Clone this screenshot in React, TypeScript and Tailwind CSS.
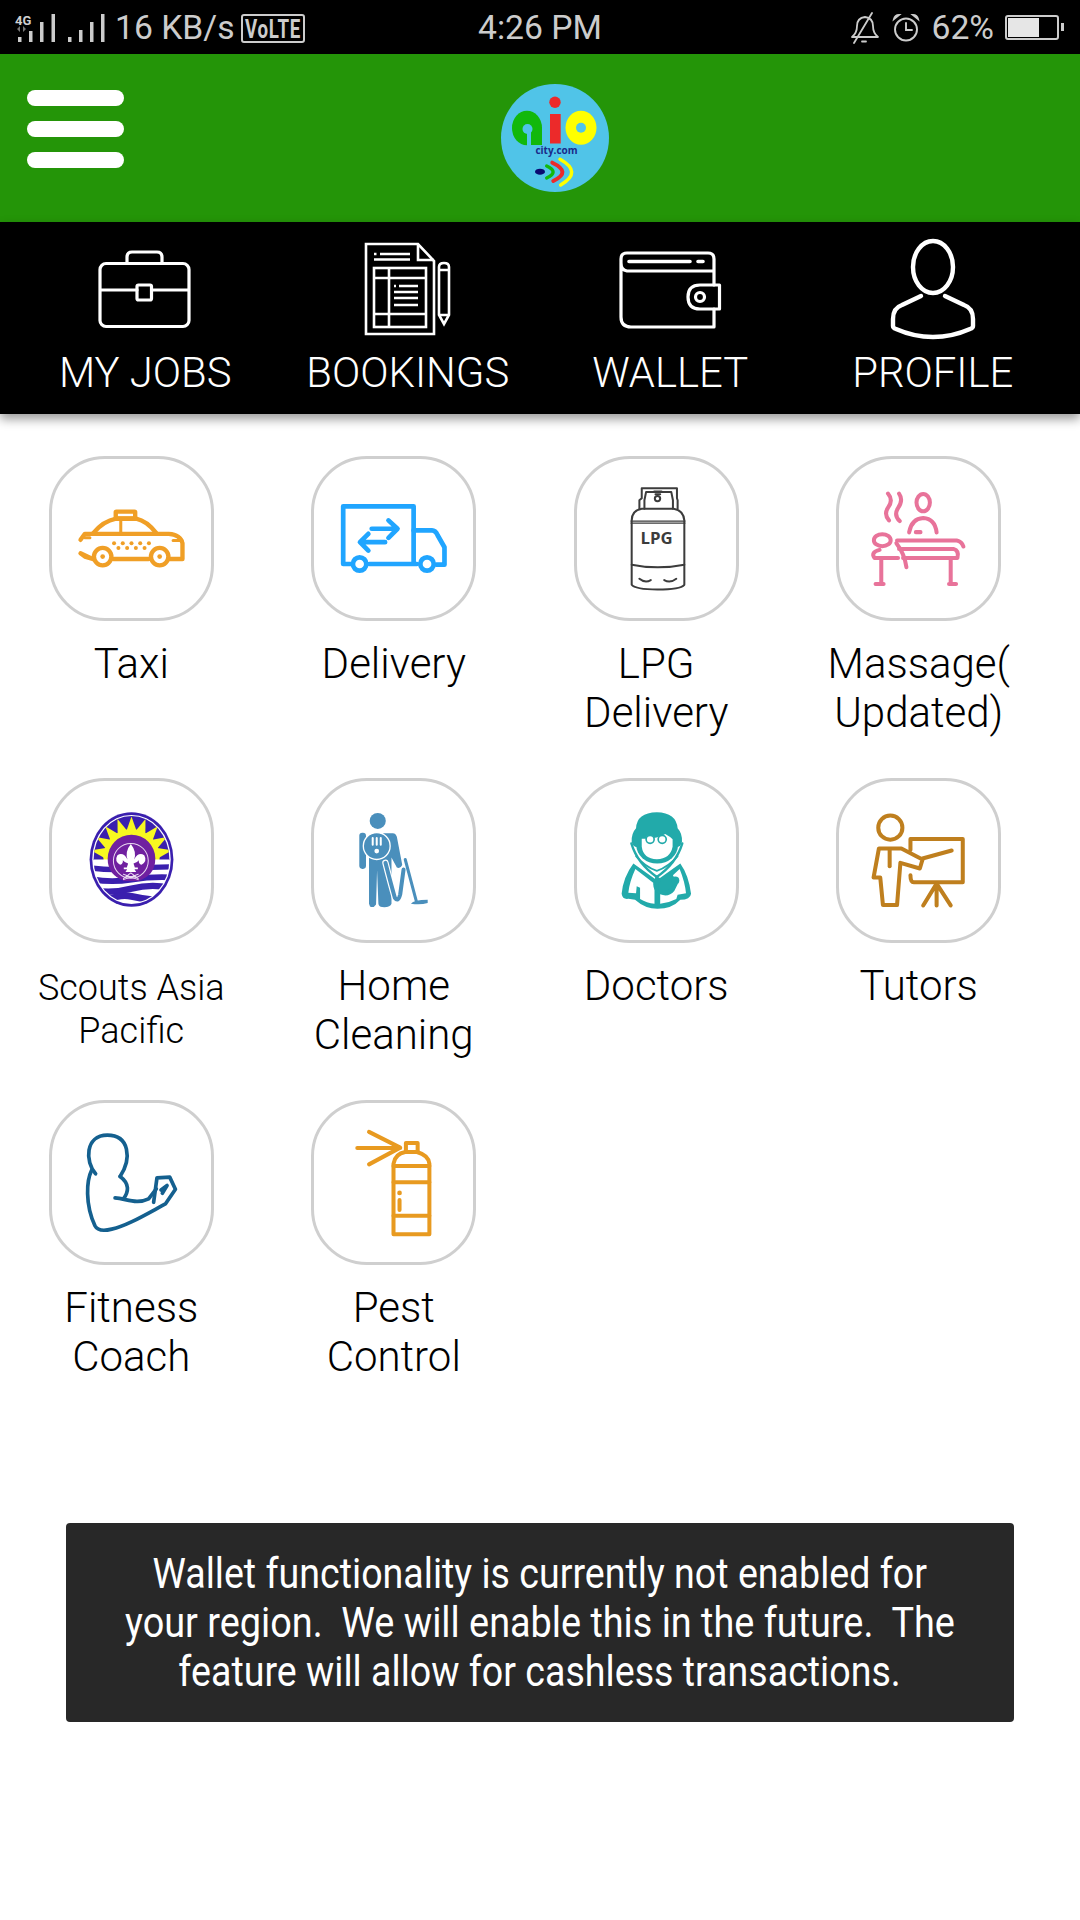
import React from "react";

const S = ({ vb, children }: { vb: string; children: React.ReactNode }) => (
  <svg viewBox={vb} className="w-[165px] h-[165px] shrink-0" fill="none" strokeLinecap="round" strokeLinejoin="round">
    {children}
  </svg>
);

const Taxi = () => (
  <S vb="58 18 492 492">
    <g stroke="#f09f26" strokeWidth="13">
      <path d="M152 268 L165 250 H415 Q450 252 456 278 V325 H418 M355 325 H250 M188 325 L165 318 L152 308 Z" />
      <path d="M190 248 Q220 212 258 205 H318 Q350 212 378 248" />
      <rect x="257" y="184" width="58" height="20" rx="2" />
      <path d="M272 205 V248 M165 262 H180 M428 270 H455" strokeWidth="9" />
      <circle cx="218" cy="318" r="26" fill="#fff" />
      <circle cx="388" cy="318" r="26" fill="#fff" />
    </g>
    <g fill="#f09f26">
      <circle cx="218" cy="318" r="7" />
      <circle cx="388" cy="318" r="7" />
      {[252, 278, 304, 330, 356].map((x) => <circle key={x} cx={x} cy="278" r="6" />)}
      {[265, 291, 317, 343].map((x) => <circle key={x} cx={x} cy="292" r="6" />)}
    </g>
  </S>
);

const Truck = () => (
  <S vb="844 18 492 492">
    <g stroke="#20a5ff" strokeWidth="14">
      <path d="M964 340 H940 V168 H1150 V340 M1018 340 H1160" />
      <path d="M1150 240 H1205 Q1215 240 1222 255 L1242 290 V342 H1218" />
      <circle cx="989" cy="340" r="20" fill="#fff" />
      <circle cx="1190" cy="340" r="20" fill="#fff" />
      <path d="M1025 235 H1100 M1075 210 L1102 235 L1075 262" />
      <path d="M1065 275 H992 M1015 250 L990 275 L1015 300" />
    </g>
  </S>
);

const Lpg = () => (
  <S vb="43 18 492 492">
    <g stroke="#3c3c3c" strokeWidth="6">
      <path d="M215 210 Q215 180 245 175 H340 Q370 180 372 210 V402 Q360 416 292 416 Q225 416 215 402 Z" />
      <path d="M213 212 H374 M213 218 H374" strokeWidth="3.5" />
      <path d="M215 342 Q292 358 372 342" />
      <path d="M238 175 V150 L245 144 V114 H350 V144 L352 150 V175" />
      <path d="M253 175 V150 L258 125 H333 L338 150 V175" />
      <path d="M238 384 Q255 398 272 388 M312 388 Q330 398 348 384" />
      <circle cx="292" cy="145" r="8" />
      <path d="M282 124 H304 M286 132 H300" strokeWidth="6" />
    </g>
    <text x="289" y="281" textAnchor="middle" fontFamily="'Open Sans', sans-serif" fontWeight="700" fontSize="50" fill="#3c3c3c">LPG</text>
  </S>
);

const Massage = () => (
  <S vb="830 18 492 492">
    <g stroke="#e8739a" strokeWidth="12">
      <path d="M985 130 Q1002 150 985 172 Q972 192 988 210" />
      <path d="M1018 130 Q1032 150 1014 175 Q1002 195 1020 212" />
      <ellipse cx="1090" cy="157" rx="20" ry="26" />
      <path d="M1048 246 Q1055 205 1090 203 Q1125 205 1130 246 M1068 245 H1082" />
      <ellipse cx="968" cy="269" rx="25" ry="18" />
      <path d="M1012 270 H1190 Q1205 273 1210 288" />
      <path d="M1018 295 H1180 Q1198 300 1192 322 H1030" />
      <path d="M1010 278 Q1035 310 1040 350" />
      <path d="M960 298 Q932 305 945 322 H1015" />
      <path d="M965 325 V400 M948 400 H972 M1172 325 V400 M1167 400 H1188" />
    </g>
  </S>
);

const rays = Array.from({ length: 9 }, (_, i) => {
  const c = (Math.PI * (i + 0.5)) / 9 + Math.PI;
  const w = Math.PI / 15;
  const p = (a: number, r: number) => `${304 + Math.cos(a) * r},${262 + Math.sin(a) * r}`;
  return `${p(c - w, 78)} ${p(c, 122)} ${p(c + w, 78)}`;
});

const Scouts = () => (
  <S vb="58 25 492 492">
    <defs>
      <clipPath id="sc">
        <ellipse cx="304" cy="268" rx="113" ry="130" />
      </clipPath>
    </defs>
    <ellipse cx="304" cy="268" rx="125" ry="141" fill="#3a1fae" />
    <ellipse cx="304" cy="268" rx="117" ry="133" fill="#fff" />
    <g clipPath="url(#sc)">
      <rect x="180" y="130" width="250" height="140" fill="#3a1fae" />
      <circle cx="304" cy="262" r="84" fill="#f8f820" />
      {rays.map((p) => <polygon key={p} points={p} fill="#f8f820" />)}
      <rect x="180" y="268" width="250" height="150" fill="#fff" />
      <path d="M180 293 Q240 302 304 296 T430 290" stroke="#3a1fae" strokeWidth="16" />
      <path d="M180 326 Q240 338 304 328 T430 322" stroke="#3a1fae" strokeWidth="17" />
      <path d="M180 358 Q240 372 304 355 T430 355" stroke="#3a1fae" strokeWidth="19" />
      <path d="M230 390 Q270 370 304 378 T380 390" stroke="#3a1fae" strokeWidth="20" />
    </g>
    <path d="M233 265 A71 71 0 0 1 375 265 Q375 315 325 332 H283 Q233 315 233 265 Z" fill="#7020a0" />
    <circle cx="302" cy="272" r="52" stroke="#e8d8f0" strokeWidth="3" />
    <path d="M302 222 Q284 245 292 268 Q280 245 262 255 Q252 272 270 284 Q280 280 278 270 Q285 278 294 280 L290 292 H281 V297 H291 L286 305 H318 L313 297 H323 V292 H314 L310 280 Q320 278 326 270 Q324 280 334 284 Q352 272 342 255 Q324 245 312 268 Q320 245 302 222 Z" fill="#fff" />
    <path d="M280 325 L302 308 L324 325 M280 312 L324 328 M324 312 L280 328" stroke="#eadcf2" strokeWidth="3" />
  </S>
);

const Cleaner = () => (
  <S vb="844 25 492 492">
    <g fill="#4a8fbc">
      <circle cx="1043" cy="153" r="24" />
      <rect x="988" y="188" width="20" height="108" rx="9" />
      <path d="M1060 190 H1088 Q1096 190 1100 200 L1116 284 Q1112 296 1100 292 L1084 262 V400 Q1080 412 1056 410 Q1046 408 1045 400 L1041 300 L1038 402 Q1030 414 1020 408 L1017 400 V260 Z" />
      <circle cx="1040" cy="228" r="40" stroke="#fff" strokeWidth="4" />
    </g>
    <path d="M1066 278 Q1082 340 1094 382 Q1104 396 1110 372 L1120 298" stroke="#fff" strokeWidth="19" />
    <path d="M1066 278 Q1082 340 1094 382 Q1104 396 1110 372 L1120 298" stroke="#4a8fbc" strokeWidth="12" />
    <path d="M1125 268 L1158 392" stroke="#4a8fbc" strokeWidth="9" />
    <path d="M1142 400 Q1150 388 1192 388 V398 Q1170 404 1142 400 Z" fill="#4a8fbc" />
    <path d="M1028 204 V224 M1040 204 V224 M1052 204 V224" stroke="#fff" strokeWidth="6" />
    <circle cx="1040" cy="243" r="7" fill="#fff" />
  </S>
);

const Doctor = () => (
  <S vb="43 25 492 492">
    <g transform="translate(120 90)">
      <path d="M100 190 Q70 230 65 280 Q68 298 85 295 L105 298 Q135 325 172 325 Q215 325 240 298 Q270 298 272 280 Q265 225 240 190 L170 240 Z" fill="#22aaaa" />
      <path d="M106 206 Q88 245 85 277 L108 279 L110 258 L120 262 V296 Q140 308 163 310 V250 Z" fill="#fff" />
      <path d="M238 206 Q254 245 257 279 L232 283 L228 296 Q205 308 180 310 V282 Q205 292 222 272 L232 252 L218 225 Z" fill="#fff" />
      <path d="M92 128 Q112 192 170 232 Q228 192 248 128 Z" fill="#fff" />
      <path d="M94 130 Q112 190 170 230 Q228 190 246 130" stroke="#22aaaa" strokeWidth="7" />
      <path d="M108 168 Q135 200 170 212 Q205 200 232 168" stroke="#22aaaa" strokeWidth="5" />
      <ellipse cx="171" cy="136" rx="62" ry="54" fill="#22aaaa" />
      <path d="M108 85 Q110 38 170 37 Q228 38 232 85 Q246 100 245 125 Q242 140 228 142 H112 Q98 140 95 125 Q94 100 108 85 Z" fill="#22aaaa" />
      <path d="M125 116 Q170 118 195 102 Q210 110 217 118 V140 Q210 176 170 177 Q130 176 125 140 Z" fill="#fff" />
      <path d="M170 226 V310" stroke="#22aaaa" strokeWidth="10" strokeLinecap="butt" />
      <circle cx="172" cy="240" r="9" fill="#22aaaa" />
      <path d="M163 250 Q165 282 195 276 Q222 270 225 245" stroke="#22aaaa" strokeWidth="8" />
      <circle cx="225" cy="241" r="12" fill="#22aaaa" />
      <circle cx="150" cy="118" r="12" fill="#fff" stroke="#22aaaa" strokeWidth="5" />
      <circle cx="186" cy="118" r="12" fill="#fff" stroke="#22aaaa" strokeWidth="5" />
    </g>
  </S>
);

const Tutor = () => (
  <S vb="830 25 492 492">
    <g stroke="#bf7f1e" strokeWidth="12">
      <circle cx="992" cy="173" r="36" />
      <path d="M958 235 H1025 L1088 268 L1080 295 L1022 278 L1012 404 H970 L962 322 H942 Z" />
      <path d="M990 240 V288" />
      <path d="M1052 240 V207 H1208 V336 H1062 Q1052 336 1052 315" />
      <path d="M1088 265 L1175 241" />
      <path d="M1130 340 V405 M1130 340 L1090 405 M1130 340 L1172 405" />
    </g>
  </S>
);

const Fitness = () => (
  <S vb="58 30 492 492">
    <g stroke="#14608f" strokeWidth="11">
      <path d="M197 250 C165 215 165 135 232 135 C298 135 305 205 270 258" />
      <path d="M185 240 C170 270 165 340 195 405 Q205 425 245 415 C290 405 340 375 405 340 L435 296 L418 260 L380 262 L370 335" />
      <path d="M270 258 C300 280 295 305 280 325 M255 322 C290 325 320 342 355 325 L378 295 M392 298 L410 285 L396 308" />
    </g>
  </S>
);

const Spray = () => (
  <S vb="844 30 492 492">
    <g stroke="#e89a20" strokeWidth="12">
      <path d="M982 173 H1110 M1017 125 L1110 172 L1017 222" />
      <path d="M1127 185 V158 H1162 V185" />
      <path d="M1090 430 V220 Q1095 190 1125 185 H1160 Q1195 195 1197 220 V430 Z" />
      <path d="M1090 227 H1197 M1090 275 H1197 M1090 375 H1197" />
      <path d="M1108 328 V358" />
    </g>
    <circle cx="1108" cy="307" r="7" fill="#e89a20" />
  </S>
);

const items: { lines: string[]; Icon: () => React.ReactElement; small?: boolean }[] = [
  { lines: ["Taxi"], Icon: Taxi },
  { lines: ["Delivery"], Icon: Truck },
  { lines: ["LPG", "Delivery"], Icon: Lpg },
  { lines: ["Massage(", "Updated)"], Icon: Massage },
  { lines: ["Scouts Asia", "Pacific"], Icon: Scouts, small: true },
  { lines: ["Home", "Cleaning"], Icon: Cleaner },
  { lines: ["Doctors"], Icon: Doctor },
  { lines: ["Tutors"], Icon: Tutor },
  { lines: ["Fitness", "Coach"], Icon: Fitness },
  { lines: ["Pest", "Control"], Icon: Spray },
];

const NavSvg = ({ children }: { children: React.ReactNode }) => (
  <svg viewBox="0 0 100 100" className="w-[100px] h-[100px] overflow-visible" fill="none" stroke="#fff" strokeLinejoin="round" strokeLinecap="round">
    {children}
  </svg>
);

const nav = [
  {
    label: "MY JOBS",
    icon: (
      <NavSvg>
        <g strokeWidth="3.2">
          <rect x="5" y="24.5" width="89" height="63" rx="6" />
          <path d="M32 24 V18 Q32 13 37 13 H62 Q67 13 67 18 V24" />
          <path d="M6 51 H42 M56.5 51 H93" />
          <rect x="42" y="46" width="14.5" height="15" rx="1.5" />
        </g>
      </NavSvg>
    ),
  },
  {
    label: "BOOKINGS",
    icon: (
      <NavSvg>
        <g strokeWidth="2.6" strokeLinecap="butt" strokeLinejoin="miter">
          <path d="M8 5 H60 L76 22 V95 H8 Z" />
          <path d="M60 5 V21 H76" />
          <path d="M22 15 H52 M16 15 H18.5 M16 20.5 H52" />
          <rect x="16" y="29" width="52" height="59" />
          <path d="M31 29 V88 M16 39 H68 M16 75 H68" />
          <path d="M41 47 H60 M36 47 H38 M36 53 H60 M36 59 H60 M36 66 H60" />
          <path d="M81 28 Q81 24 86 24 Q91 24 91 28 V76 L86 85 L81 76 Z M81 31 H91 M81 76 H91" />
        </g>
      </NavSvg>
    ),
  },
  {
    label: "WALLET",
    icon: (
      <NavSvg>
        <g strokeWidth="3.2">
          <path d="M94 46 V32 H7 Q1 31 1 24 V20 Q1 14 7 14 H88 Q94 14 94 20 V32 M1 24 V78 Q1 88 11 88 H94 V70" />
          <path d="M9 22.5 H70 M78 22.5 H83" strokeWidth="3.6" />
          <path d="M99.5 46 V70 H80 Q68 70 68 58 Q68 46 80 46 Z" />
          <circle cx="80" cy="58" r="4.5" />
        </g>
      </NavSvg>
    ),
  },
  {
    label: "PROFILE",
    icon: (
      <NavSvg>
        <g strokeWidth="4.4">
          <ellipse cx="50" cy="28" rx="20" ry="26" />
          <path d="M38 57 L19 66 Q10 69 10 80 V87 Q10 89 13 90 Q31 98 50 98 Q69 98 87 90 Q90 89 90 87 V80 Q90 69 81 66 L62 57" />
        </g>
      </NavSvg>
    ),
  },
];

const Logo = () => (
  <svg viewBox="501 84 108 108" className="w-[108px] h-[108px]">
    <circle cx="555" cy="138" r="54" fill="#50c4e8" />
    <ellipse cx="527" cy="128" rx="15" ry="17.3" fill="#12b80c" />
    <rect x="527" y="127" width="15" height="18" fill="#12b80c" />
    <circle cx="527.5" cy="129" r="5" fill="#50c4e8" />
    <rect x="527" y="129" width="4" height="17" fill="#50c4e8" />
    <rect x="550" y="114" width="10.7" height="29.5" fill="#ec2a2a" />
    <circle cx="555" cy="102.3" r="5.7" fill="#ec2a2a" />
    <ellipse cx="581" cy="127.7" rx="15.5" ry="17" fill="#ffff00" />
    <circle cx="581" cy="127.7" r="5" fill="#50c4e8" />
    <text x="556.5" y="154" textAnchor="middle" fontFamily="'Open Sans', sans-serif" fontWeight="700" fontSize="10" fill="#1a2a8a">city.com</text>
    <ellipse cx="540" cy="171.7" rx="5" ry="3" fill="#0a0a70" />
    <g fill="none" strokeLinecap="round">
      <path d="M546.7 166 Q559.5 172 546.7 178" stroke="#12b80c" strokeWidth="3.4" />
      <path d="M552.3 162.7 Q572 172 553.3 181" stroke="#ec2a2a" strokeWidth="4" />
      <path d="M560 159.3 Q583 172 560.7 185" stroke="#ffff00" strokeWidth="3.5" />
    </g>
  </svg>
);

const StatusLeft = () => (
  <svg viewBox="0 0 112 54" className="w-[112px] h-[54px] shrink-0" fill="#ccc">
    <text x="15" y="23.5" fontFamily="Roboto, sans-serif" fontWeight="700" fontSize="13" fill="#d0d0d0">4G</text>
    <path d="M17 28 L20 25 V31 Z M23 25 L26 28 L23 31 Z" fill="#777" />
    <rect x="18" y="36" width="3.5" height="5" />
    <rect x="29" y="30" width="3.5" height="11" />
    <rect x="40" y="21" width="3.5" height="20" />
    <rect x="51.5" y="13" width="3.5" height="28" />
    <rect x="68" y="36" width="3.5" height="5" />
    <rect x="79" y="29" width="3.5" height="12" />
    <rect x="90" y="21" width="3.5" height="20" />
    <rect x="101" y="13" width="3.5" height="28" />
  </svg>
);

const StatusRight = () => (
  <svg viewBox="0 0 30 32" className="w-[30px] h-[32px] shrink-0" fill="none" stroke="#ccc" strokeWidth="1.8" strokeLinecap="round" strokeLinejoin="round">
    <path d="M2 25 Q7 21 7 14 Q7 6 15 5 Q23 6 23 14 Q23 21 28 25 Z" />
    <path d="M4 31 L22 1" />
    <path d="M12 29.5 H16" />
  </svg>
);

const Alarm = () => (
  <svg viewBox="0 0 28 28" className="w-[28px] h-[28px] shrink-0" fill="none" stroke="#ccc" strokeWidth="1.9" strokeLinecap="round">
    <circle cx="14" cy="15.5" r="11" />
    <path d="M14 9 V16 H20" />
    <path d="M2 5 Q3 1 7 1 Z M26 5 Q25 1 21 1 Z" fill="#ccc" />
  </svg>
);

export default function App() {
  return (
    <div className="w-[1080px] min-h-[1920px] bg-white flex flex-col [font-family:Roboto,sans-serif]">
      <div className="h-[54px] bg-black grid grid-cols-[1fr_auto_1fr] items-center text-[#ccc] text-[33.7px] leading-[56px]">
        <div className="flex items-center min-w-0">
          <StatusLeft />
          <span className="ml-[3px] whitespace-nowrap">16 KB/s</span>
          <div className="ml-[6px] mt-[1px] w-[64px] h-[29px] shrink-0 border-2 border-[#ccc] rounded-[3px] flex items-center justify-center text-[26px] leading-none font-bold overflow-hidden">
            <span className="scale-x-[0.72] whitespace-nowrap tracking-[1px]">VoLTE</span>
          </div>
        </div>
        <span className="whitespace-nowrap">4:26 PM</span>
        <div className="flex items-center justify-end min-w-0 pr-[16px]">
          <StatusRight />
          <span className="ml-[12px]"><Alarm /></span>
          <span className="ml-[11px] whitespace-nowrap">62%</span>
          <div className="ml-[11px] w-[54px] h-[25px] border-2 border-[#ccc] rounded-[3px] p-[1px] mt-[-2px]">
            <div className="w-[31px] h-full bg-[#e6e6e6]" />
          </div>
          <div className="ml-[2px] w-[3px] h-[8px] bg-[#ccc] mt-[-2px]" />
        </div>
      </div>

      <div className="h-[168px] bg-[#249508] relative pl-[27px] pt-[36px] flex flex-col gap-[15px]">
        <div className="w-[97px] h-[16px] rounded-full bg-white" />
        <div className="w-[97px] h-[16px] rounded-full bg-white" />
        <div className="w-[97px] h-[16px] rounded-full bg-white" />
        <div className="absolute left-[501px] top-[30px]">
          <Logo />
        </div>
      </div>

      <div className="h-[192px] bg-black grid grid-cols-4 w-full pl-[14px] pr-[16px] shadow-[0_5px_10px_rgba(0,0,0,0.4)] relative">
        {nav.map((n) => (
          <div key={n.label} className="flex flex-col items-center pt-[17px]">
            {n.icon}
            <span className="mt-[9px] text-[41.8px] leading-[49px] font-light text-white whitespace-nowrap">{n.label}</span>
          </div>
        ))}
      </div>

      <div className="mt-[42px] w-[1050px] grid grid-cols-4 auto-rows-[322px]">
        {items.map(({ lines, Icon, small }) => (
          <div key={lines.join(" ")} className="flex flex-col items-center">
            <div className="w-[165px] h-[165px] border-[3px] border-[#cfcfcf] rounded-[56px] flex items-center justify-center">
              <Icon />
            </div>
            <div className={small ? "mt-[24px] text-[36px] leading-[43px] font-light text-black text-center" : "mt-[18px] text-[42px] leading-[49px] font-light text-black text-center"}>
              {lines.map((l) => (
                <div key={l} className="whitespace-nowrap">{l}</div>
              ))}
            </div>
          </div>
        ))}
      </div>

      <div className="mt-[101px] mx-[66px] h-[199px] bg-[#282828] rounded-[4px] flex flex-col items-center justify-center text-white text-[42px] leading-[49px] text-center">
        <div className="whitespace-pre scale-x-[0.895]">Wallet functionality is currently not enabled for</div>
        <div className="whitespace-pre scale-x-[0.9]">your region.  We will enable this in the future.  The</div>
        <div className="whitespace-pre scale-x-[0.895]">feature will allow for cashless transactions.</div>
      </div>
    </div>
  );
}
